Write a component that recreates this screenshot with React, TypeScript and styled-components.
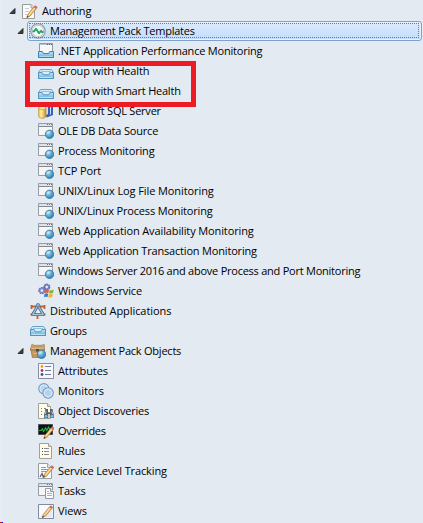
import React from "react";
import styled, { createGlobalStyle } from "styled-components";

const GlobalStyle = createGlobalStyle`
  html, body { margin: 0; padding: 0; background: #e3eaf2; overflow: hidden; }
`;

const Panel = styled.main`
  position: relative;
  box-sizing: border-box;
  width: 423px;
  height: 523px;
  padding-top: 1px;
  overflow: hidden;
  background: linear-gradient(90deg, #e9eef5 0, #e3eaf2 3px);
  color: #000;
  font-family: "Open Sans", "Noto Sans", sans-serif;
  font-size: 11px;
`;

const Tree = styled.ul`
  display: flex;
  flex-direction: column;
  margin: 0;
  padding: 0;
  list-style: none;
`;

const Row = styled.li<{ $depth: number }>`
  display: flex;
  align-items: center;
  height: 20px;
  padding-left: ${(p) => 7 + p.$depth * 8}px;
  padding-right: 1px;
`;

const Toggle = styled.span`
  display: flex;
  flex: none;
  width: 12px;
  height: 20px;
`;

const Item = styled.span<{ $selected?: boolean }>`
  position: relative;
  display: flex;
  flex: ${(p) => (p.$selected ? "1" : "none")};
  align-items: center;
  gap: 4px;
  box-sizing: border-box;
  height: 20px;
  padding-left: ${(p) => (p.$selected ? 2 : 3)}px;
  border: ${(p) => (p.$selected ? "1px solid #7da2ce" : "none")};
  border-radius: 3px;
  background: ${(p) => (p.$selected ? "linear-gradient(#dcebfc, #c1dbfc)" : "none")};
  box-shadow: ${(p) => (p.$selected ? "inset 0 0 0 1px #e8f2fd" : "none")};
`;

const FocusRing = styled.span`
  position: absolute;
  inset: 1px 2px 2px 1px;
  border: 1px dotted #6d7b8d;
`;

const Label = styled.span<{ $spacing: number }>`
  line-height: 18px;
  white-space: pre;
  letter-spacing: ${(p) => p.$spacing}px;
`;

const Glyph = styled.svg`
  display: block;
  flex: none;
  width: 16px;
  height: 16px;
`;

const Arrow = styled.svg`
  display: block;
  width: 12px;
  height: 20px;
`;

const Highlight = styled.div`
  position: absolute;
  left: 25px;
  top: 61px;
  box-sizing: border-box;
  width: 171px;
  height: 46px;
  border: 5px solid #ed1c24;
`;

const CornerMark = styled.div`
  position: absolute;
  left: 0;
  bottom: 0;
  width: 3px;
  height: 1px;
  background: linear-gradient(90deg, #f00 0 1px, #0a7a20 1px 2px, #00f 2px 3px);
`;

const Gradients = styled.svg`
  position: absolute;
  width: 0;
  height: 0;
`;

const Pencil = () => (
  <g>
    <path d="M5 14.3 5.8 11.4 12 3.8 14.2 5.6 8 13.2Z" fill="#f3bd68" stroke="#a67844" strokeWidth=".7" />
    <path d="M7 12 12.8 4.8" stroke="#ffe9b4" strokeWidth=".9" />
    <path d="M11.8 4 13.2 2.2 15.6 4.2 14.2 6Z" fill="#cf6a5e" />
    <path d="M4.6 14.7 5.3 12.9 6.6 13.9Z" fill="#222" />
  </g>
);

const Globe = () => (
  <g>
    <circle cx="11.5" cy="11.3" r="4.2" fill="url(#globe)" stroke="#35779f" strokeWidth=".8" />
    <path d="M9 9.6Q10.6 7.9 12.6 8.7Q11.8 10.4 9.4 10.8Z" fill="#d2effb" opacity=".75" />
  </g>
);

const WindowFrame = () => (
  <g>
    <path d="M.5.5H14.5V12.5H.5Z" fill="#f6f6f6" stroke="#979ca5" />
    <path d="M1 1H14V3H1Z" fill="#dfe2e7" />
    <path d="M1 3.5H14" stroke="#838a96" />
    <path d="M9 1.5H10M11 1.5H12M13 1.5H14" stroke="#6d7583" />
  </g>
);

const Sheet = () => (
  <g>
    <path d="M1.5.5H10.5L13.5 3.5V15.5H1.5Z" fill="#fffbe9" stroke="#a3a196" />
    <path d="M10.5.5V3.5H13.5" fill="#e9dfbd" stroke="#a3a196" />
  </g>
);

const Tray = () => (
  <g>
    <path d="M2.5 4.5H13.5L15.5 7.5V13.5H.5V7.5Z" fill="#d7eefa" stroke="#6a9fc4" />
    <path d="M3 6.5H13" stroke="#8fc5e2" />
    <path d="M.5 7.5H4L5.3 9.8H10.7L12 7.5H15.5V13.5H.5Z" fill="url(#tray)" stroke="#5593bc" />
    <path d="M1.5 12.5H14.5" stroke="#b9e4f8" />
  </g>
);

const icons: Record<string, React.ReactNode> = {
  authoring: (
    <>
      <path d="M.5 1.5H9L12.5 5V15.5H.5Z" fill="#fafafa" stroke="#9b9b9b" />
      <path d="M9 1.5V5H12.5" fill="#ddd" stroke="#aaa" />
      <path d="M3 5.5H7M3 8.5H7M3 11.5H5" stroke="#c9cdd2" />
      <Pencil />
    </>
  ),
  health: (
    <>
      <circle cx="8" cy="8" r="7.2" fill="#dfe6ea" stroke="#8d98a1" strokeWidth="1.1" />
      <circle cx="8" cy="8" r="5.6" fill="#f8fbf9" stroke="#b4c0c6" strokeWidth=".8" />
      <path d="M2.5 8.4H4L6 5.8 9 10.2 11 7.8 12.2 9H13.5" fill="none" stroke="#23a568" strokeWidth="1.9" strokeLinejoin="round" />
    </>
  ),
  inbox: (
    <>
      <path d="M1.5.5H14.5V11H1.5Z" fill="#f5f7f9" stroke="#8d99a5" />
      <path d="M2 1.5H14" stroke="#b7c1cb" />
      <path d="M9 1.5H10M11 1.5H12M13 1.5H14" stroke="#536575" />
      <path d="M.5 8.5H4.3L5.3 10.5H10.7L11.7 8.5H15.5V14.5H.5Z" fill="url(#tray)" stroke="#3e83b7" />
      <path d="M1.5 13.5H14.5" stroke="#a9d9f2" />
    </>
  ),
  tray: <g transform="translate(0 2)"><Tray /></g>,
  groups: <g transform="translate(0 -1)"><Tray /></g>,
  sql: (
    <>
      <path d="M7.5 2 15 1V12L9 14.5 7 12Z" fill="#365fbf" />
      <path d="M8 2 10 1.5V11L8 12ZM12 1.5 13 1.3V11L12 12Z" fill="#cedffa" />
      <path d="M.7 5V13.3C.7 15.8 8 15.8 8 13.3V5Z" fill="url(#gold)" stroke="#bb842a" strokeWidth=".7" />
      <ellipse cx="4.35" cy="5" rx="3.65" ry="1.5" fill="#fff1a5" stroke="#c39539" strokeWidth=".7" />
    </>
  ),
  web: (
    <>
      <WindowFrame />
      <Globe />
    </>
  ),
  service: (
    <>
      <circle cx="8.8" cy="4" r="2.6" fill="#a5aed8" stroke="#6069b0" strokeWidth="1.9" strokeDasharray="1.8 .5" />
      <circle cx="3.9" cy="7.6" r="2.7" fill="#aab2d9" stroke="#6a72b4" strokeWidth="1.9" strokeDasharray="1.8 .5" />
      <circle cx="8.8" cy="4" r="1" fill="#f4f5fc" />
      <circle cx="3.9" cy="7.6" r="1" fill="#f4f5fc" />
      <path d="M7.2 6.6Q9 5.8 11 6.7L10.4 10Q8.6 9.3 6.7 10Z" fill="#e2602a" />
      <path d="M11.6 6.9Q13.8 7.5 15.7 6.5L15 10Q13 10.8 11.1 10.2Z" fill="#78b84b" />
      <path d="M6.6 10.7Q8.3 10 10.2 10.7L9.6 14Q7.8 13.3 6 14.1Z" fill="#397bd1" />
      <path d="M10.9 10.9Q12.9 11.5 14.9 10.7L14.2 14Q12.1 15 10.2 14.2Z" fill="#f0b62d" />
    </>
  ),
  distributed: (
    <>
      <path d="M1 3.5H15M1.5 2V6M14.5 2V6M.5 11.5H15.5M7.5 11V16" stroke="#bf6038" strokeWidth="1.8" />
      <path d="M8 2.5 13.3 11.5H2.7Z" fill="#eaf0f6" stroke="#496b85" strokeWidth="3" strokeLinejoin="round" />
      <path d="M8 2.5 13.3 11.5H2.7Z" fill="none" stroke="#a5c6dc" strokeWidth="1.3" strokeLinejoin="round" />
      <circle cx="8" cy="2.2" r="1.8" fill="#8fb2c8" stroke="#4e7088" strokeWidth=".7" />
    </>
  ),
  pack: (
    <>
      <path d="M2 1 4 2.3H12L14 1 14.6 4H1.3Z" fill="#d0ac7c" stroke="#a07c50" strokeWidth=".7" />
      <path d="M1 7H14V14.5H2.3Z" fill="#c4955c" stroke="#8a673f" strokeWidth=".6" />
      <path d="M0 4.5H15V8H0Z" fill="#ae8a5d" />
      <path d="M1.5 5.5H13.5M3 10.5H8" stroke="#ddb982" />
      <path d="M6 6H9V8.6H6Z" fill="#59452f" />
      <Globe />
    </>
  ),
  attributes: (
    <>
      <path d="M.5.5H15.5V15.5H.5Z" fill="#f7f8fe" stroke="#8c8f9b" />
      <path d="M7 3.5H13M7 7.5H13M7 11.5H13" stroke="#77799c" />
      <circle cx="4" cy="3.5" r="1.4" fill="#eaa322" />
      <circle cx="4" cy="7.5" r="1.4" fill="#c63532" />
      <circle cx="4" cy="11.5" r="1.4" fill="#285cb1" />
    </>
  ),
  monitors: (
    <>
      <circle cx="5.8" cy="5.7" r="5.1" fill="#bad5ef" stroke="#7a9ec6" strokeWidth="1.1" />
      <circle cx="5.8" cy="5.7" r="3.8" fill="none" stroke="#e3effa" strokeWidth=".8" />
      <circle cx="10.1" cy="10" r="5.2" fill="#c9dff3" fillOpacity=".9" stroke="#7196c1" strokeWidth="1.1" />
      <circle cx="10.1" cy="10" r="3.8" fill="#abc9e8" fillOpacity=".65" stroke="#e4effa" strokeWidth=".8" />
    </>
  ),
  discoveries: (
    <>
      <g transform="translate(-1 0)"><Sheet /></g>
      <path d="M3 5.5H4M3 8.5H4M3 11.5H4M6 5.5H8" stroke="#777d86" />
      <path d="M7.5 6H10V9L11 9.5 12 9V6H14.5L16 13V15H11.7V11H10.3V15H6V12Z" fill="#52606c" />
      <path d="M8 8 7.3 11M13.8 8 14.5 11" stroke="#b9cad3" />
      <circle cx="8" cy="13.2" r="1.5" fill="#78bee6" />
      <circle cx="14" cy="13.2" r="1.5" fill="#78bee6" />
    </>
  ),
  overrides: (
    <>
      <path d="M.5 1.5H14.5V11.5H.5Z" fill="#111" stroke="#4b4e50" />
      <path d="M1 7.5H3L4.3 5.8 5.5 8.5 7.5 5 8.8 7.5 10.5 4 11.5 6H13.5" fill="none" stroke="#21b849" strokeWidth="1.1" />
      <g transform="translate(1 1)"><Pencil /></g>
    </>
  ),
  rules: (
    <>
      <Sheet />
      <path d="M4 5.5H5M4 8.5H5M4 11.5H5" stroke="#4f5560" />
      <path d="M6 5.5H11M6 8.5H11M6 11.5H11" stroke="#858a97" />
    </>
  ),
  tracking: (
    <>
      <path d="M.5.5H9.5L13.5 4.5V15.5H.5Z" fill="#f8f9fb" stroke="#989ca5" />
      <path d="M9.5.5V4.5H13.5" fill="#dfe2e7" stroke="#a2a6ad" />
      <path d="M3 4.5H8M3 6.5H10M3 8.5H9" stroke="#9299a6" />
      <path d="M2 14 4 10.5 5 13.5 7 12" fill="none" stroke="#566276" strokeWidth="1.2" />
      <g transform="translate(.5 0)"><Pencil /></g>
    </>
  ),
  tasks: (
    <>
      <WindowFrame />
      <path d="M7.5 5.5H12.5L15.5 8.5V15.5H7.5Z" fill="#fafbfd" stroke="#9299a5" />
      <path d="M12.5 5.5V8.5H15.5" fill="#e6e9ee" stroke="#9299a5" />
      <path d="M9 8.5H11M9 10.5H14M9 12.5H14" stroke="#a5b0c0" />
    </>
  ),
  views: (
    <>
      <path d="M.5 1.5H15.5V15.5H.5Z" fill="#f8faff" stroke="#808b9d" />
      <path d="M1.5 14 14.5 3V14.5H1.5Z" fill="#e4ebf6" />
      <g transform="translate(-.5 0)"><Pencil /></g>
    </>
  ),
};

interface Node {
  label: string;
  icon: string;
  depth: number;
  spacing: number;
  open?: boolean;
  selected?: boolean;
}

const nodes: Node[] = [
  { label: "Authoring", icon: "authoring", depth: 0, spacing: -0.2, open: true },
  { label: "Management Pack Templates", icon: "health", depth: 1, spacing: -0.25, open: true, selected: true },
  { label: ".NET Application Performance Monitoring", icon: "inbox", depth: 2, spacing: -0.21 },
  { label: "Group with Health", icon: "tray", depth: 2, spacing: -0.17 },
  { label: "Group with Smart Health", icon: "tray", depth: 2, spacing: -0.22 },
  { label: "Microsoft SQL Server", icon: "sql", depth: 2, spacing: -0.23 },
  { label: "OLE DB Data Source", icon: "web", depth: 2, spacing: -0.19 },
  { label: "Process Monitoring", icon: "web", depth: 2, spacing: -0.14 },
  { label: "TCP Port", icon: "web", depth: 2, spacing: -0.13 },
  { label: "UNIX/Linux Log File Monitoring", icon: "web", depth: 2, spacing: -0.09 },
  { label: "UNIX/Linux Process Monitoring", icon: "web", depth: 2, spacing: -0.17 },
  { label: "Web Application Availability Monitoring", icon: "web", depth: 2, spacing: -0.12 },
  { label: "Web Application Transaction Monitoring", icon: "web", depth: 2, spacing: -0.18 },
  { label: "Windows Server 2016 and above Process and Port Monitoring", icon: "web", depth: 2, spacing: -0.24 },
  { label: "Windows Service", icon: "service", depth: 2, spacing: -0.14 },
  { label: "Distributed Applications", icon: "distributed", depth: 1, spacing: -0.07 },
  { label: "Groups", icon: "groups", depth: 1, spacing: -0.16 },
  { label: "Management Pack Objects", icon: "pack", depth: 1, spacing: -0.22, open: true },
  { label: "Attributes", icon: "attributes", depth: 2, spacing: -0.1 },
  { label: "Monitors", icon: "monitors", depth: 2, spacing: -0.03 },
  { label: "Object Discoveries", icon: "discoveries", depth: 2, spacing: -0.19 },
  { label: "Overrides", icon: "overrides", depth: 2, spacing: -0.27 },
  { label: "Rules", icon: "rules", depth: 2, spacing: -0.15 },
  { label: "Service Level Tracking", icon: "tracking", depth: 2, spacing: -0.13 },
  { label: "Tasks", icon: "tasks", depth: 2, spacing: -0.15 },
  { label: "Views", icon: "views", depth: 2, spacing: -0.05 },
];

export default function App() {
  return (
    <Panel>
      <GlobalStyle />
      <Gradients>
        <defs>
          <radialGradient id="globe" cx=".35" cy=".3" r=".75">
            <stop offset="0" stopColor="#b5e2f5" />
            <stop offset=".55" stopColor="#5ba8d3" />
            <stop offset="1" stopColor="#2c77ae" />
          </radialGradient>
          <linearGradient id="tray" x1="0" y1="0" x2="0" y2="1">
            <stop offset="0" stopColor="#bce4f7" />
            <stop offset="1" stopColor="#68b3dd" />
          </linearGradient>
          <linearGradient id="gold">
            <stop offset="0" stopColor="#f6c94f" />
            <stop offset=".35" stopColor="#fff0a0" />
            <stop offset="1" stopColor="#d08a1f" />
          </linearGradient>
        </defs>
      </Gradients>
      <Tree>
        {nodes.map((node) => (
          <Row key={node.label} $depth={node.depth}>
            <Toggle>
              {node.open && (
                <Arrow viewBox="0 0 12 20">
                  <path d="M8 7.5V12.5H3Z" fill="#404040" stroke="#262626" strokeWidth=".9" />
                </Arrow>
              )}
            </Toggle>
            <Item $selected={node.selected}>
              {node.selected && <FocusRing />}
              <Glyph viewBox="0 0 16 16">{icons[node.icon]}</Glyph>
              <Label $spacing={node.spacing}>{node.label}</Label>
            </Item>
          </Row>
        ))}
      </Tree>
      <Highlight />
      <CornerMark />
    </Panel>
  );
}
